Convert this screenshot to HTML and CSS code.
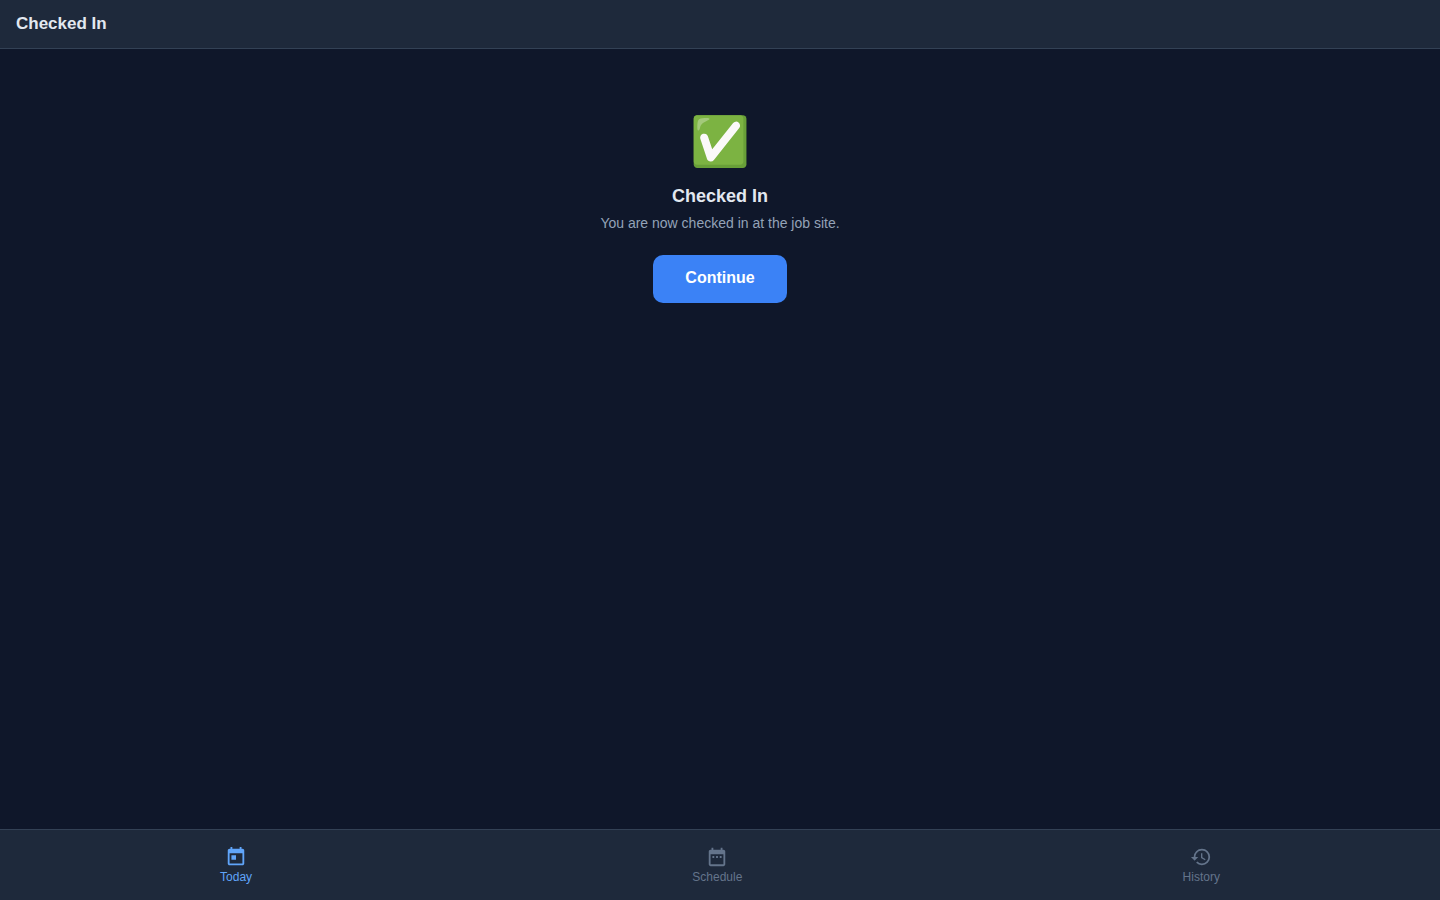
FILE: index.html
```html
<!DOCTYPE html>
<html lang="en">
<head>
    <meta charset="UTF-8">
    <meta name="viewport" content="width=device-width, initial-scale=1.0">
    <title>Checked In</title>
    <link rel="stylesheet" href="styles.css">
</head>
<body>
    <header class="topbar">
        <h1>Checked In</h1>
    </header>

    <main class="content">
        <div class="result">
            <div class="result-icon">✅</div>
            <h2>Checked In</h2>
            <p>You are now checked in at the job site.</p>
            <button type="button" class="btn">Continue</button>
        </div>
    </main>

    <!-- Bottom tabs -->
    <nav class="tabs">
        <a href="#today" class="tab active">
            <svg viewBox="0 0 24 24"><path d="M19 3h-1V1h-2v2H8V1H6v2H5c-1.11 0-1.99.9-1.99 2L3 19c0 1.1.89 2 2 2h14c1.1 0 2-.9 2-2V5c0-1.1-.9-2-2-2zm0 16H5V8h14v11zM7 10h5v5H7z"/></svg>
            Today
        </a>
        <a href="#schedule" class="tab">
            <svg viewBox="0 0 24 24"><path d="M9 11H7v2h2v-2zm4 0h-2v2h2v-2zm4 0h-2v2h2v-2zm2-7h-1V2h-2v2H8V2H6v2H5c-1.11 0-1.99.9-1.99 2L3 20c0 1.1.89 2 2 2h14c1.1 0 2-.9 2-2V6c0-1.1-.9-2-2-2zm0 16H5V9h14v11z"/></svg>
            Schedule
        </a>
        <a href="#history" class="tab">
            <svg viewBox="0 0 24 24"><path d="M13 3a9 9 0 0 0-9 9H1l3.89 3.89.07.14L9 12H6c0-3.87 3.13-7 7-7s7 3.13 7 7-3.13 7-7 7c-1.93 0-3.68-.79-4.94-2.06l-1.42 1.42A8.954 8.954 0 0 0 13 21a9 9 0 0 0 0-18zm-1 5v5l4.28 2.54.72-1.21-3.5-2.08V8H12z"/></svg>
            History
        </a>
    </nav>
</body>
</html>
```
FILE: styles.css
```css
* {
    box-sizing: border-box;
}

body {
    font-family: "Liberation Sans", Arial, sans-serif;
    margin: 0;
    min-height: 100vh;
    background: #0f172a;
    color: #e2e8f0;
    display: flex;
    flex-direction: column;
}

h1, h2, p {
    margin: 0;
}

.topbar {
    background: #1e293b;
    border-bottom: 1px solid #334155;
    padding: 14px 16px;
}

.topbar h1 {
    font-size: 17px;
    line-height: 20px;
}

.content {
    flex: 1;
    padding: 16px;
}

.result {
    padding: 48px 16px;
    text-align: center;
}

.result-icon {
    font-size: 48px;
    line-height: 58px;
    margin-bottom: 14px;
}

.result h2 {
    font-size: 18px;
    line-height: 22px;
    margin-bottom: 8px;
}

.result p {
    font-size: 14px;
    line-height: 16px;
    color: #94a3b8;
    margin-bottom: 24px;
}

.btn {
    font-family: inherit;
    font-size: 16px;
    font-weight: 600;
    line-height: 18px;
    padding: 14px 32px 16px;
    background: #3b82f6;
    color: #fff;
    border: none;
    border-radius: 10px;
    cursor: pointer;
}

.tabs {
    background: #1e293b;
    border-top: 1px solid #334155;
    padding: 8px 0;
    display: flex;
    justify-content: space-around;
}

.tab {
    display: flex;
    flex-direction: column;
    align-items: center;
    gap: 2px;
    padding: 8px 16px;
    font-size: 12px;
    line-height: 14px;
    color: #64748b;
    text-decoration: none;
}

.tab.active {
    color: #60a5fa;
}

.tab svg {
    width: 22px;
    height: 22px;
    fill: currentColor;
}
```
